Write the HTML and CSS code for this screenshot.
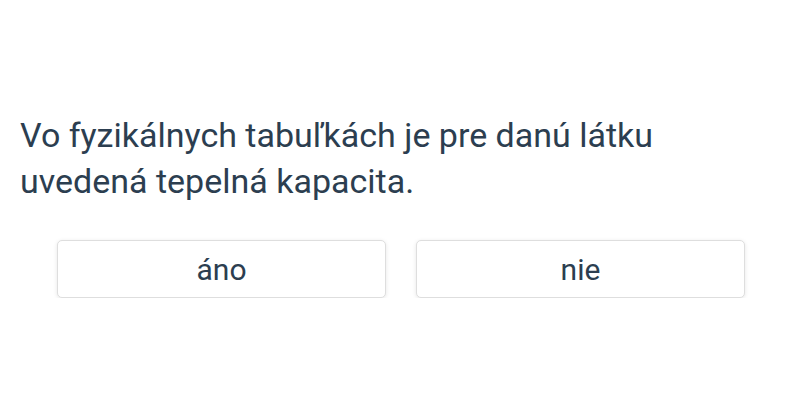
FILE: index.html
```html
<!DOCTYPE html>
<html lang="sk">
<head>
<meta charset="utf-8">
<link rel="stylesheet" href="styles.css">
</head>
<body>
<main class="quiz">
  <p class="question">Vo fyzikálnych tabuľkách je pre danú látku uvedená tepelná kapacita.</p>
  <div class="answers">
    <button class="answer">áno</button>
    <button class="answer">nie</button>
  </div>
</main>
</body>
</html>
```

FILE: styles.css
```css
html, body {
  margin: 0;
  background: #ffffff;
}
.quiz {
  padding: 112px 20px 0 20px;
  font-family: Roboto, "Noto Sans", sans-serif;
  color: #2c3e50;
}
.question {
  margin: 0;
  font-size: 34px;
  line-height: 46px;
  max-width: 700px;
}
.answers {
  display: grid;
  grid-template-columns: 1fr 1fr;
  gap: 30px;
  margin: 36px 35px 0 37px;
}
.answer {
  height: 58px;
  background: #ffffff;
  border: 1px solid #dedede;
  border-radius: 5px;
  box-shadow: 0 1px 4px rgba(0,0,0,0.1);
  font-family: Roboto, "Noto Sans", sans-serif;
  font-size: 30px;
  color: #2c3e50;
  padding: 0;
}
```
